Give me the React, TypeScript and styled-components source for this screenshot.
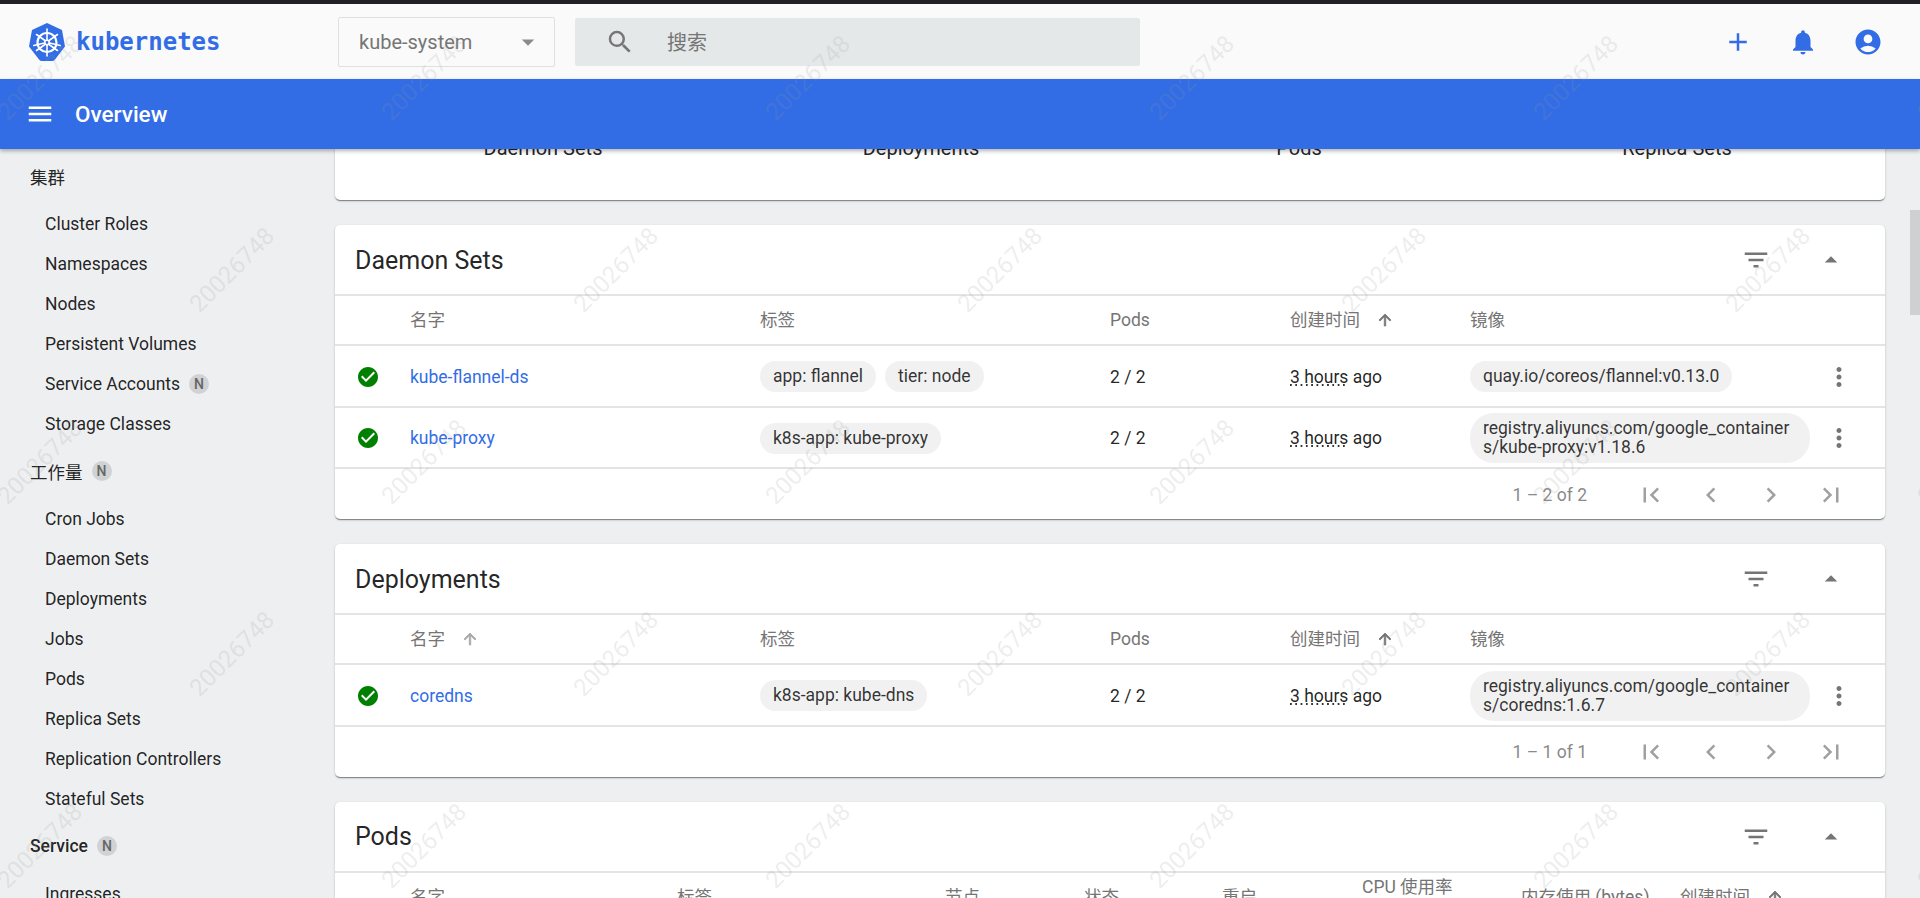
import React from 'react';
import styled, { createGlobalStyle } from 'styled-components';
import {
  MdAccountCircle,
  MdAdd,
  MdArrowDropDown,
  MdArrowDropUp,
  MdArrowUpward,
  MdCheckCircle,
  MdChevronLeft,
  MdChevronRight,
  MdFilterList,
  MdFirstPage,
  MdLastPage,
  MdMenu,
  MdMoreVert,
  MdNotifications,
  MdSearch,
} from 'react-icons/md';

const FONT = 'Roboto, "Noto Sans CJK SC", sans-serif';
const BLUE = '#326de6';
const WORKLOAD_COLUMNS = '75px 350px 350px 180px 180px 345px 48px';
const POD_COLUMNS = '75px 267px 268px 139px 138px 140px 159px 159px 1fr';

const GlobalStyle = createGlobalStyle`
  html, body {
    margin: 0;
    height: 100%;
    overflow: hidden;
    font-family: ${FONT};
  }
  * {
    box-sizing: border-box;
  }
`;

const Page = styled.div`
  position: relative;
  height: 898px;
  display: flex;
  flex-direction: column;
  overflow: hidden;
  background: #edeff0;
`;

const TopEdge = styled.div`
  height: 4px;
  flex: none;
  background: #202124;
`;

const Toolbar = styled.header`
  height: 75px;
  flex: none;
  display: flex;
  align-items: center;
  padding: 0 37px 0 29px;
  background: #fafafa;
`;

const Logo = styled.div`
  width: 309px;
  flex: none;
  display: flex;
  align-items: center;
  gap: 11px;
  font-family: "DejaVu Sans Mono", monospace;
  font-size: 24px;
  font-weight: 700;
  color: ${BLUE};
`;

const NamespaceSelect = styled.div`
  width: 217px;
  height: 50px;
  flex: none;
  display: flex;
  align-items: center;
  justify-content: space-between;
  padding: 0 11px 0 20px;
  border: 1px solid #e0e0e0;
  border-radius: 2px;
  font-size: 20px;
  color: #757575;
  background: #fafafa;
  svg {
    color: #8a8a8a;
  }
`;

const SearchBox = styled.div`
  width: 565px;
  height: 48px;
  flex: none;
  margin-left: 20px;
  display: flex;
  align-items: center;
  gap: 32px;
  padding-left: 30px;
  border-radius: 2px;
  background: #e5e8e8;
  font-size: 20px;
  color: #757575;
`;

const ToolbarActions = styled.div`
  margin-left: auto;
  display: flex;
  align-items: center;
  gap: 35px;
  color: ${BLUE};
`;

const TitleBar = styled.div`
  position: relative;
  z-index: 2;
  height: 70px;
  flex: none;
  display: flex;
  align-items: center;
  gap: 20px;
  padding-left: 25px;
  background: ${BLUE};
  color: #fff;
  font-size: 22.5px;
  font-weight: 500;
  box-shadow: 0 2px 4px rgba(0, 0, 0, 0.3);
`;

const Body = styled.div`
  flex: 1;
  min-height: 0;
  display: flex;
`;

const Sidebar = styled.nav`
  width: 320px;
  flex: none;
  padding-left: 30px;
  overflow: hidden;
  font-size: 17.5px;
  color: rgba(0, 0, 0, 0.87);
`;

const NavHeading = styled.div<{ $strong?: boolean }>`
  height: 40px;
  margin: 7px 0 8px;
  display: flex;
  align-items: center;
  gap: 9px;
  font-weight: ${({ $strong }) => ($strong ? 500 : 400)};
`;

const NavItem = styled.div`
  height: 40px;
  margin-left: 15px;
  display: flex;
  align-items: center;
  gap: 9px;
`;

const NewBadge = styled.span`
  width: 20px;
  height: 20px;
  display: inline-flex;
  align-items: center;
  justify-content: center;
  border-radius: 50%;
  background: #d0d2d3;
  color: #666;
  font-size: 14px;
  font-weight: 500;
`;

const Content = styled.main`
  flex: 1;
  min-width: 0;
  padding: 0 25px 0 15px;
  overflow: hidden;
`;

const CardStack = styled.div`
  margin-top: -149px;
  display: flex;
  flex-direction: column;
  gap: 25px;
`;

const Card = styled.section`
  flex: none;
  border-radius: 5px;
  background: #fff;
  box-shadow: 0 2px 1px -1px rgba(0, 0, 0, 0.25), 0 1px 1px rgba(0, 0, 0, 0.2), 0 1px 3px rgba(0, 0, 0, 0.14);
`;

const SummaryCard = styled(Card)`
  height: 200px;
  display: grid;
  grid-template-columns: repeat(4, 1fr);
  align-items: end;
  padding: 0 19px 40px;
  font-size: 20px;
  text-align: center;
  color: rgba(0, 0, 0, 0.87);
`;

const CardHeader = styled.div`
  height: 71px;
  display: flex;
  align-items: center;
  padding: 1px 39px 0 20px;
  border-bottom: 2px solid #e4e4e4;
  font-size: 25px;
  color: rgba(0, 0, 0, 0.87);
`;

const CardTitle = styled.div`
  flex: 1;
`;

const HeaderIcons = styled.div`
  display: flex;
  align-items: center;
  gap: 45px;
  color: #757575;
`;

const TableRow = styled.div<{ $columns: string; $height: number; $nudge?: number }>`
  display: grid;
  grid-template-columns: ${({ $columns }) => $columns};
  align-items: center;
  height: ${({ $height }) => $height}px;
  padding-top: ${({ $nudge }) => $nudge ?? 0}px;
  border-bottom: 2px solid #e4e4e4;
  font-size: 17.5px;
  color: rgba(0, 0, 0, 0.87);
`;

const HeadCell = styled.div`
  display: flex;
  align-items: center;
  gap: 16px;
  line-height: 20px;
  color: #757575;
  svg path {
    stroke: currentColor;
    stroke-width: 1;
  }
  svg path[fill='none'] {
    stroke: none;
  }
`;

const StatusCell = styled.div`
  display: flex;
  justify-content: flex-end;
  padding-right: 30px;
  color: #008000;
`;

const NameLink = styled.span`
  color: ${BLUE};
`;

const ChipList = styled.div`
  display: flex;
  flex-wrap: wrap;
  gap: 9px;
`;

const Chip = styled.span`
  max-width: 340px;
  padding: 6px 13px;
  border-radius: 24px;
  background: #f1f1f1;
  line-height: 19px;
  word-break: break-all;
  color: rgba(0, 0, 0, 0.8);
`;

const RelativeTime = styled.span`
  background-image: linear-gradient(to right, #333 1.5px, transparent 1.5px);
  background-size: 5.3px 1.5px;
  background-position: 0 17px;
  background-repeat: repeat-x;
`;

const KebabCell = styled.div`
  display: flex;
  justify-content: center;
  color: #757575;
`;

const Paginator = styled.div`
  height: 50px;
  display: flex;
  align-items: center;
  justify-content: flex-end;
  padding: 1px 39px 0 0;
  font-size: 17.5px;
  color: #8a8a8a;
`;

const RangeLabel = styled.span`
  margin-right: 49px;
`;

const PageButtons = styled.div`
  display: flex;
  gap: 30px;
  color: #a0a0a0;
`;

const ScrollTrack = styled.div`
  width: 10px;
  flex: none;
  padding-top: 61px;
`;

const ScrollThumb = styled.div`
  height: 105px;
  background: #cfd0d1;
`;

const Watermarks = styled.div`
  position: absolute;
  top: -18px;
  left: -56px;
  z-index: 3;
  display: grid;
  grid-template-columns: repeat(11, 192px);
  grid-auto-rows: 192px;
  pointer-events: none;
`;

const Stamp = styled.span`
  display: flex;
  align-items: center;
  justify-content: center;
  font-size: 24px;
  color: rgba(150, 150, 150, 0.18);
  transform: rotate(-45deg);
`;

const KubeLogo: React.FC = () => (
  <svg width="36" height="38" viewBox="0 0 36 38" aria-hidden="true">
    <path d="M18 0 L33 7 L36 23.5 L26 36.5 Q25 38 23 38 L13 38 Q11 38 10 36.5 L0 23.5 L3 7 Z" fill={BLUE} />
    <g stroke="#fff" fill="none" strokeLinecap="round">
      <circle cx="18" cy="19.5" r="9.5" strokeWidth="2.2" />
      <circle cx="18" cy="19.5" r="2.2" strokeWidth="1.6" />
      <path
        d="M18 6V17M18 22V33M7.5 11.5L16 17.5M20 21.5L28.5 27.5M28.5 11.5L20 17.5M16 21.5L7.5 27.5M4.8 22.5L15.5 20M20.5 20L31.2 22.5"
        strokeWidth="1.6"
      />
    </g>
  </svg>
);

const Ago: React.FC = () => (
  <div>
    <RelativeTime>3 hours</RelativeTime> ago
  </div>
);

type WorkloadRow = { name: string; labels: string[]; image: string };

const WorkloadCard: React.FC<{ title: string; rows: WorkloadRow[]; sortName?: boolean; range: string }> = ({
  title,
  rows,
  sortName,
  range,
}) => (
  <Card>
    <CardHeader>
      <CardTitle>{title}</CardTitle>
      <HeaderIcons>
        <MdFilterList size={30} />
        <MdArrowDropUp size={30} />
      </HeaderIcons>
    </CardHeader>
    <TableRow $columns={WORKLOAD_COLUMNS} $height={50}>
      <div />
      <HeadCell>
        名字
        {sortName && <MdArrowUpward size={18} color="#a8a8a8" />}
      </HeadCell>
      <HeadCell>标签</HeadCell>
      <HeadCell>Pods</HeadCell>
      <HeadCell>
        创建时间
        <MdArrowUpward size={18} />
      </HeadCell>
      <HeadCell>镜像</HeadCell>
    </TableRow>
    {rows.map((row) => (
      <TableRow key={row.name} $columns={WORKLOAD_COLUMNS} $height={61.5} $nudge={2}>
        <StatusCell>
          <MdCheckCircle size={24} />
        </StatusCell>
        <NameLink>{row.name}</NameLink>
        <ChipList>
          {row.labels.map((label) => (
            <Chip key={label}>{label}</Chip>
          ))}
        </ChipList>
        <div>2 / 2</div>
        <Ago />
        <ChipList>
          <Chip>{row.image}</Chip>
        </ChipList>
        <KebabCell>
          <MdMoreVert size={30} />
        </KebabCell>
      </TableRow>
    ))}
    <Paginator>
      <RangeLabel>{range}</RangeLabel>
      <PageButtons>
        <MdFirstPage size={30} />
        <MdChevronLeft size={30} />
        <MdChevronRight size={30} />
        <MdLastPage size={30} />
      </PageButtons>
    </Paginator>
  </Card>
);

const clusterItems = ['Cluster Roles', 'Namespaces', 'Nodes', 'Persistent Volumes', 'Service Accounts', 'Storage Classes'];
const workloadItems = [
  'Cron Jobs',
  'Daemon Sets',
  'Deployments',
  'Jobs',
  'Pods',
  'Replica Sets',
  'Replication Controllers',
  'Stateful Sets',
];

const App: React.FC = () => (
  <Page>
    <GlobalStyle />
    <TopEdge />
    <Toolbar>
      <Logo>
        <KubeLogo />
        kubernetes
      </Logo>
      <NamespaceSelect>
        kube-system
        <MdArrowDropDown size={30} />
      </NamespaceSelect>
      <SearchBox>
        <MdSearch size={30} />
        搜索
      </SearchBox>
      <ToolbarActions>
        <MdAdd size={30} />
        <MdNotifications size={30} />
        <MdAccountCircle size={30} />
      </ToolbarActions>
    </Toolbar>
    <TitleBar>
      <MdMenu size={30} />
      Overview
    </TitleBar>
    <Body>
      <Sidebar>
        <NavHeading>集群</NavHeading>
        {clusterItems.map((item) => (
          <NavItem key={item}>
            {item}
            {item === 'Service Accounts' && <NewBadge>N</NewBadge>}
          </NavItem>
        ))}
        <NavHeading>
          工作量
          <NewBadge>N</NewBadge>
        </NavHeading>
        {workloadItems.map((item) => (
          <NavItem key={item}>{item}</NavItem>
        ))}
        <NavHeading $strong>
          Service
          <NewBadge>N</NewBadge>
        </NavHeading>
        <NavItem>Ingresses</NavItem>
      </Sidebar>
      <Content>
        <CardStack>
          <SummaryCard>
            <span>Daemon Sets</span>
            <span>Deployments</span>
            <span>Pods</span>
            <span>Replica Sets</span>
          </SummaryCard>
          <WorkloadCard
            title="Daemon Sets"
            range="1 – 2 of 2"
            rows={[
              { name: 'kube-flannel-ds', labels: ['app: flannel', 'tier: node'], image: 'quay.io/coreos/flannel:v0.13.0' },
              {
                name: 'kube-proxy',
                labels: ['k8s-app: kube-proxy'],
                image: 'registry.aliyuncs.com/google_containers/kube-proxy:v1.18.6',
              },
            ]}
          />
          <WorkloadCard
            title="Deployments"
            range="1 – 1 of 1"
            sortName
            rows={[
              {
                name: 'coredns',
                labels: ['k8s-app: kube-dns'],
                image: 'registry.aliyuncs.com/google_containers/coredns:1.6.7',
              },
            ]}
          />
          <Card>
            <CardHeader>
              <CardTitle>Pods</CardTitle>
              <HeaderIcons>
                <MdFilterList size={30} />
                <MdArrowDropUp size={30} />
              </HeaderIcons>
            </CardHeader>
            <TableRow $columns={POD_COLUMNS} $height={50}>
              <div />
              <HeadCell>名字</HeadCell>
              <HeadCell>标签</HeadCell>
              <HeadCell>节点</HeadCell>
              <HeadCell>状态</HeadCell>
              <HeadCell>重启</HeadCell>
              <HeadCell>
                <span>
                  CPU 使用率
                  <br />
                  (cores)
                </span>
              </HeadCell>
              <HeadCell>内存使用 (bytes)</HeadCell>
              <HeadCell>
                创建时间
                <MdArrowUpward size={18} />
              </HeadCell>
            </TableRow>
          </Card>
        </CardStack>
      </Content>
      <ScrollTrack>
        <ScrollThumb />
      </ScrollTrack>
    </Body>
    <Watermarks>
      {Array.from({ length: 55 }, (_, i) => {
        const row = Math.floor(i / 11);
        const col = i % 11;
        return <Stamp key={i}>{(row + col) % 2 === 0 ? '20026748' : ''}</Stamp>;
      })}
    </Watermarks>
  </Page>
);

export default App;
